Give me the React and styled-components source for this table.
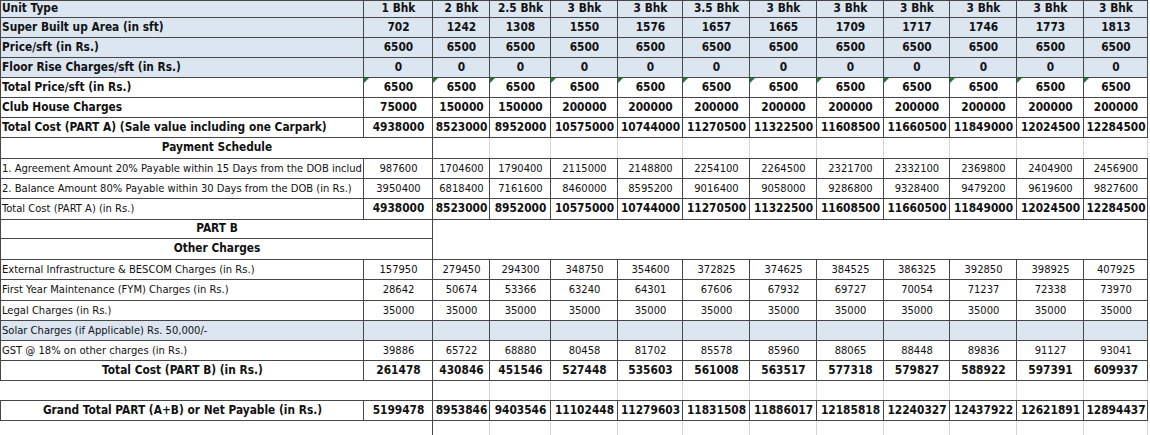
import React from "react";
import styled, { createGlobalStyle, css } from "styled-components";

const Global = createGlobalStyle`
  html, body { margin: 0; padding: 0; background: #ffffff; }
  body { font-family: "DejaVu Sans Condensed", "DejaVu Sans", sans-serif; }
`;

const BLUE = "#dce6f1";
const LINE = "#474747";
const GRID = "#d6d6d6";

const Sheet = styled.table`
  border-collapse: collapse;
  table-layout: fixed;
  width: 1147px;
  font-family: "DejaVu Sans Condensed", "DejaVu Sans", sans-serif;
  font-size: 11.1px;
  color: #111111;
`;

const Row = styled.tr`
  height: ${(p) => p.$h || 20}px;
`;

const Cell = styled.td`
  position: relative;
  padding: 0 0 0 1px;
  border: 1px solid ${LINE};
  background: ${(p) => (p.$blue ? BLUE : "#ffffff")};
  font-weight: ${(p) => (p.$bold ? 700 : 400)};
  font-size: ${(p) => (p.$bold ? "11.8px" : "11.1px")};
  text-align: ${(p) => p.$align || "center"};
  white-space: nowrap;
  overflow: hidden;
  line-height: 1;
  vertical-align: middle;
  ${(p) =>
    p.$flag &&
    css`
      &::before {
        content: "";
        position: absolute;
        left: 0;
        top: 0;
        border-top: 5px solid #1f7a33;
        border-right: 5px solid transparent;
      }
    `}
`;

const Blank = styled.td`
  border: 1px solid ${GRID};
  border-left-color: ${(p) => (p.$first ? LINE : GRID)};
  border-top-color: ${(p) => (p.$darkTop ? LINE : GRID)};
  border-bottom-color: ${(p) => (p.$darkBottom ? LINE : GRID)};
  background: #ffffff;
`;

const Open = styled.td`
  border: none;
  border-top: ${(p) => (p.$top ? `1px solid ${LINE}` : "none")};
  border-bottom: ${(p) => (p.$bottom ? `1px solid ${LINE}` : "none")};
  border-right: 1px solid ${LINE};
  background: #ffffff;
`;

const widths = [363, 69, 57, 61, 67, 65, 67, 67, 67, 66, 67, 67, 64];

const units = ["1 Bhk", "2 Bhk", "2.5 Bhk", "3 Bhk", "3 Bhk", "3.5 Bhk", "3 Bhk", "3 Bhk", "3 Bhk", "3 Bhk", "3 Bhk", "3 Bhk"];
const area = [702, 1242, 1308, 1550, 1576, 1657, 1665, 1709, 1717, 1746, 1773, 1813];
const same = (v) => Array(12).fill(v);
const club = [75000, 150000, 150000, 200000, 200000, 200000, 200000, 200000, 200000, 200000, 200000, 200000];
const totalA = [4938000, 8523000, 8952000, 10575000, 10744000, 11270500, 11322500, 11608500, 11660500, 11849000, 12024500, 12284500];
const agreement = [987600, 1704600, 1790400, 2115000, 2148800, 2254100, 2264500, 2321700, 2332100, 2369800, 2404900, 2456900];
const balance = [3950400, 6818400, 7161600, 8460000, 8595200, 9016400, 9058000, 9286800, 9328400, 9479200, 9619600, 9827600];
const external = [157950, 279450, 294300, 348750, 354600, 372825, 374625, 384525, 386325, 392850, 398925, 407925];
const fym = [28642, 50674, 53366, 63240, 64301, 67606, 67932, 69727, 70054, 71237, 72338, 73970];
const gst = [39886, 65722, 68880, 80458, 81702, 85578, 85960, 88065, 88448, 89836, 91127, 93041];
const totalB = [261478, 430846, 451546, 527448, 535603, 561008, 563517, 577318, 579827, 588922, 597391, 609937];
const grand = [5199478, 8953846, 9403546, 11102448, 11279603, 11831508, 11886017, 12185818, 12240327, 12437922, 12621891, 12894437];

function DataRow({ label, values, h, blue, boldLabel, boldValues, centerLabel, flag }) {
  return (
    <Row $h={h}>
      <Cell $align={centerLabel ? "center" : "left"} $bold={boldLabel} $blue={blue}>
        {label}
      </Cell>
      {values.map((v, i) => (
        <Cell key={i} $bold={boldValues} $blue={blue} $flag={flag}>
          {v}
        </Cell>
      ))}
    </Row>
  );
}

function GridRest({ darkTop, darkBottom }) {
  return Array.from({ length: 11 }, (_, i) => (
    <Blank key={i} $first={i === 0} $darkTop={darkTop} $darkBottom={darkBottom} />
  ));
}

export default function App() {
  return (
    <>
      <Global />
      <Sheet>
        <colgroup>
          {widths.map((w, i) => (
            <col key={i} style={{ width: w }} />
          ))}
        </colgroup>
        <tbody>
          <DataRow h={17} label="Unit Type" values={units} blue boldLabel boldValues />
          <DataRow label="Super Built up Area (in sft)" values={area} blue boldLabel boldValues />
          <DataRow label="Price/sft (in Rs.)" values={same(6500)} blue boldLabel boldValues />
          <DataRow label="Floor Rise Charges/sft (in Rs.)" values={same(0)} blue boldLabel boldValues />
          <DataRow label="Total Price/sft (in Rs.)" values={same(6500)} boldLabel boldValues flag />
          <DataRow label="Club House Charges" values={club} boldLabel boldValues />
          <DataRow label="Total Cost (PART A) (Sale value including one Carpark)" values={totalA} boldLabel boldValues />

          <Row $h={21}>
            <Cell colSpan={2} $bold>Payment Schedule</Cell>
            <GridRest darkTop darkBottom />
          </Row>
          <DataRow label="1. Agreement Amount 20% Payable within 15 Days from the DOB includ" values={agreement} />
          <DataRow label="2. Balance Amount 80% Payable within 30 Days from the DOB (in Rs.)" values={balance} />
          <DataRow h={21} label="Total Cost (PART A) (in Rs.)" values={totalA} boldValues />

          <Row $h={19}>
            <Cell colSpan={2} $bold>PART B</Cell>
            <Cell colSpan={11} rowSpan={2} />
          </Row>
          <Row $h={21}>
            <Cell colSpan={2} $bold>Other Charges</Cell>
          </Row>
          <DataRow label="External Infrastructure & BESCOM Charges (in Rs.)" values={external} />
          <DataRow h={21} label="First Year Maintenance (FYM) Charges (in Rs.)" values={fym} />
          <DataRow label="Legal Charges (in Rs.)" values={same(35000)} />
          <DataRow label="Solar Charges (if Applicable) Rs. 50,000/-" values={same("")} blue />
          <DataRow label="GST @ 18% on other charges (in Rs.)" values={gst} />
          <DataRow label="Total Cost (PART B) (in Rs.)" values={totalB} boldLabel boldValues centerLabel />

          <Row>
            <Open colSpan={2} $top $bottom />
            <GridRest darkTop darkBottom />
          </Row>
          <DataRow label="Grand Total PART (A+B) or Net Payable (in Rs.)" values={grand} boldLabel boldValues centerLabel />
          <Row>
            <Open colSpan={2} $top />
            <GridRest darkTop />
          </Row>
        </tbody>
      </Sheet>
    </>
  );
}
